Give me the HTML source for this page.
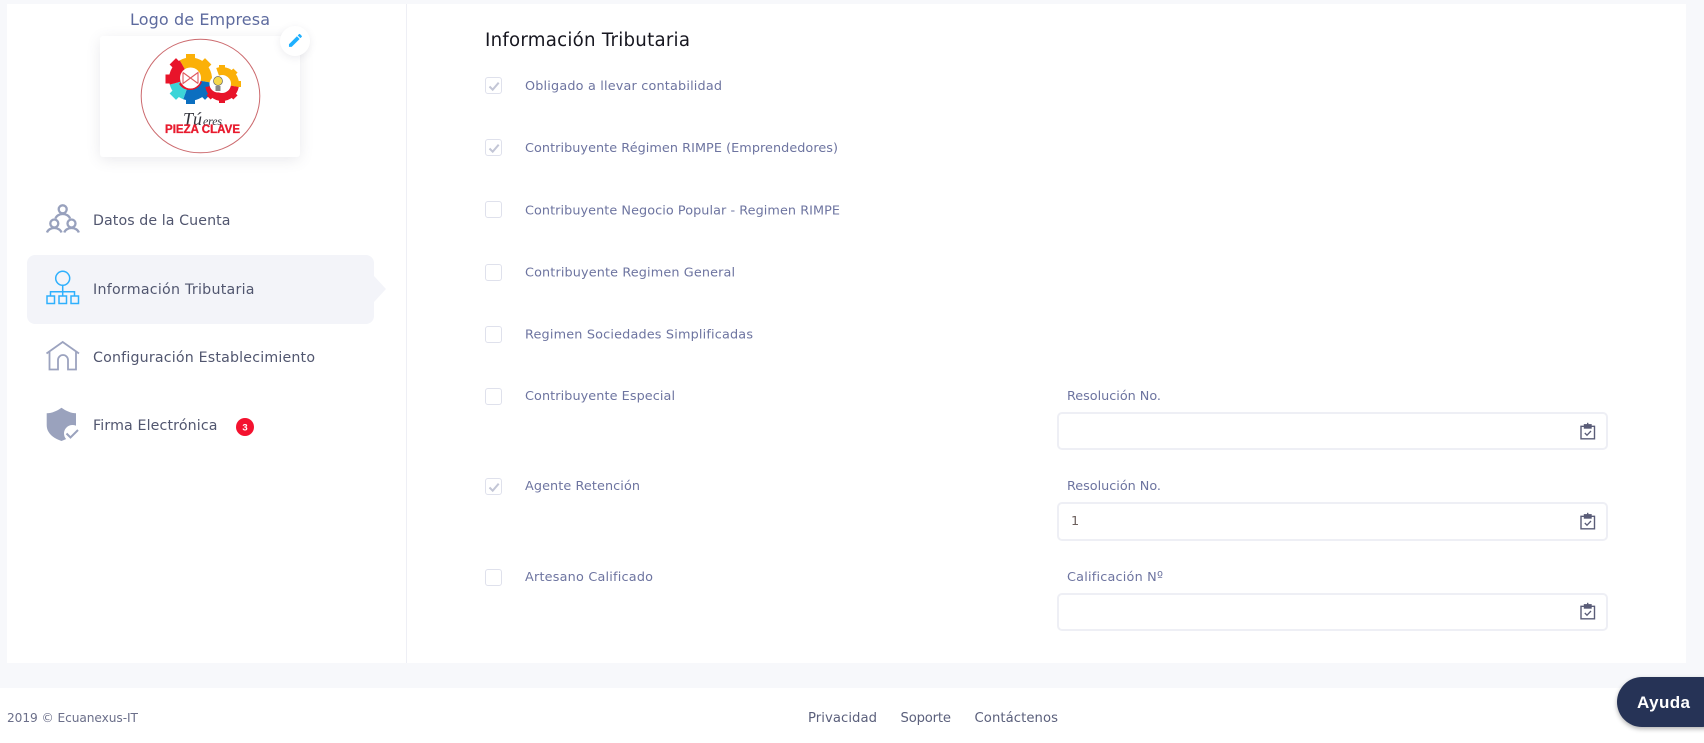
<!DOCTYPE html>
<html lang="es">
<head>
<meta charset="utf-8">
<title>Información Tributaria</title>
<style>
html,body{margin:0;padding:0;width:1704px;height:743px;overflow:hidden;background:#f7f8fb}
.abs{position:absolute}
#card{left:7px;top:4px;width:1679px;height:659px;background:#fff}
#div{left:406px;top:4px;width:1px;height:659px;background:#eeeff5}
#foot{left:0;top:688px;width:1704px;height:55px;background:#fff}
#logo{left:100px;top:36px;width:200px;height:121px;background:#fff;border-radius:3px;box-shadow:0 3px 14px rgba(80,80,110,.12)}
#edit{left:280px;top:26px;width:30px;height:30px;border-radius:50%;background:#fff;box-shadow:0 2px 8px rgba(80,80,110,.1)}
#act{left:27px;top:255px;width:347px;height:69px;background:#f3f4f9;border-radius:8px}
#arrow{left:374px;top:276px;width:0;height:0;border-left:12px solid #f3f4f9;border-top:13px solid transparent;border-bottom:13px solid transparent}
.cb{position:absolute;left:485px;width:15px;height:15px;border:1.5px solid #dfe1ec;border-radius:3px;background:#fff}
.in{position:absolute;left:1057px;width:547px;border:2px solid #eeeff5;border-radius:5px;background:#fff}
#ay{left:1617px;top:677px;width:110px;height:50px;background:#263356;border-radius:25px;box-shadow:0 2px 5px rgba(0,0,0,.3)}
svg{position:absolute;left:0;top:0}
text{font-family:"DejaVu Sans","Liberation Sans",sans-serif}
.l{font-size:12.8px;fill:#6d74a0}
.n{font-size:14.2px;fill:#51566f}
.f{font-size:13.2px;fill:#5b607c}
</style>
</head>
<body>
<div class="abs" id="card"></div>
<div class="abs" id="div"></div>
<div class="abs" id="foot"></div>
<div class="abs" id="logo"></div>
<div class="abs" id="edit"></div>
<div class="abs" id="act"></div>
<div class="abs" id="arrow"></div>

<div class="cb" style="top:77px"></div>
<div class="cb" style="top:139px"></div>
<div class="cb" style="top:201px"></div>
<div class="cb" style="top:264px"></div>
<div class="cb" style="top:326px"></div>
<div class="cb" style="top:388px"></div>
<div class="cb" style="top:478px"></div>
<div class="cb" style="top:569px"></div>

<div class="in" style="top:412px;height:34px"></div>
<div class="in" style="top:502px;height:35px"></div>
<div class="in" style="top:593px;height:34px"></div>

<div class="abs" id="ay"></div>

<svg width="1704" height="743" viewBox="0 0 1704 743">
  <!-- logo -->
  <ellipse cx="200.5" cy="96" rx="59.3" ry="56.8" fill="none" stroke="#cc6a6e" stroke-width="1"/>
  <g fill="#fbb008">
    <rect x="186" y="54" width="9" height="9"/>
    <rect x="186" y="54" width="9" height="9" transform="rotate(45 190.5 79)"/>
  </g>
  <g fill="#0b6fc0">
    <rect x="186" y="54" width="9" height="9" transform="rotate(135 190.5 79)"/>
    <rect x="186" y="54" width="9" height="9" transform="rotate(180 190.5 79)"/>
  </g>
  <rect x="186" y="54" width="9" height="9" fill="#3cd5d8" transform="rotate(225 190.5 79)"/>
  <g fill="#e8142a">
    <rect x="186" y="54" width="9" height="9" transform="rotate(270 190.5 79)"/>
    <rect x="186" y="54" width="9" height="9" transform="rotate(315 190.5 79)"/>
  </g>
  <g fill="none" stroke-width="13">
    <path d="M183 66A15 15 0 0 1 205.300 81.600" stroke="#fbb008"/>
    <path d="M205.300 81.600A15 15 0 0 1 185.400 93.100" stroke="#0b6fc0"/>
    <path d="M185.400 93.100A15 15 0 0 1 176 82.900" stroke="#3cd5d8"/>
    <path d="M176 82.900A15 15 0 0 1 183 66" stroke="#e8142a"/>
  </g>
  <path d="M179 84A13 13 0 0 0 202 82L198 79A10 10 0 0 1 181 82Z" fill="#e8142a"/>
  <circle cx="190.500" cy="78" r="10.500" fill="#fff"/>
  <path d="M183 72.500V83.500L198 72.500V83.500M183 72.500L190.500 78L183 83.500M198 72.500L190.500 78L198 83.500" fill="none" stroke="#df5a60" stroke-width="1.100"/>
  <g fill="#fbb008">
    <rect x="219" y="65" width="6" height="6"/>
    <rect x="219" y="65" width="6" height="6" transform="rotate(45 222 84)"/>
    <rect x="219" y="65" width="6" height="6" transform="rotate(90 222 84)"/>
  </g>
  <g fill="#e8142a">
    <rect x="219" y="65" width="6" height="6" transform="rotate(135 222 84)"/>
    <rect x="219" y="65" width="6" height="6" transform="rotate(180 222 84)"/>
    <rect x="219" y="65" width="6" height="6" transform="rotate(225 222 84)"/>
  </g>
  <g fill="none" stroke-width="8">
    <path d="M217.600 71.800A13 13 0 0 1 234.800 86.300" stroke="#fbb008"/>
    <path d="M234.800 86.300A13 13 0 0 1 209.200 86.300" stroke="#e8142a"/>
  </g>
  <circle cx="218" cy="84" r="8.500" fill="#fff"/>
  <circle cx="218" cy="81" r="4.500" fill="#f7d94c" stroke="#666" stroke-width=".7"/>
  <rect x="215.500" y="86" width="5" height="5" fill="#888"/>
  <text x="183" y="125" font-size="18" style="font-family:'Liberation Serif',serif;font-style:italic;fill:#33343c">Tú</text>
  <text x="203" y="125" font-size="12" textLength="19" style="font-family:'Liberation Serif',serif;font-style:italic;fill:#33343c">eres</text>
  <text x="165" y="133" font-size="11.500" font-weight="700" textLength="75" stroke="#e81b2e" stroke-width=".35" style="font-family:'Liberation Sans',sans-serif;fill:#e81b2e">PIEZA CLAVE</text>

  <!-- edit pencil -->
  <path transform="translate(286.800 31.800) scale(.72)" fill="#1fb0ff" d="M3 17.250V21h3.750L17.810 9.940l-3.750-3.750L3 17.250zM20.710 7.040a1 1 0 0 0 0-1.410l-2.340-2.340a1 1 0 0 0-1.410 0l-1.830 1.830 3.750 3.750 1.830-1.830z"/>

  <!-- headings -->
  <text x="130" y="25" font-size="16" textLength="140" fill="#5d6a9e">Logo de Empresa</text>
  <text x="485" y="46" font-size="18.200" textLength="205" fill="#16161f">Información Tributaria</text>

  <!-- nav -->
  <g fill="none" stroke="#98a1bd" stroke-width="2.300">
    <circle cx="62.700" cy="209.300" r="4"/>
    <path d="M55.500 218.500a7.500 6 0 0 1 14.500 0"/>
    <circle cx="54.300" cy="223.500" r="4"/>
    <path d="M47 232.500a7.500 6 0 0 1 14.500 0"/>
    <circle cx="71.500" cy="223.500" r="4"/>
    <path d="M64.300 232.500a7.500 6 0 0 1 14.500 0"/>
  </g>
  <text class="n" x="93" y="225" textLength="137.500">Datos de la Cuenta</text>

  <g fill="none" stroke="#2fb0fd" stroke-width="1.500">
    <circle cx="62.700" cy="278.300" r="7"/>
    <path d="M62.700 285.300V296M50.500 296V291.700H74.500V296"/>
    <rect x="47" y="296" width="7.500" height="7.500"/>
    <rect x="59" y="296" width="7.500" height="7.500"/>
    <rect x="71" y="296" width="7.500" height="7.500"/>
  </g>
  <text class="n" x="93" y="294" textLength="161.500">Información Tributaria</text>

  <path d="M46.500 353.500L62.700 342L79 353.500M49.500 351.500V369.500H58V360a5 5 0 0 1 10 0V369.500H76V351.500" fill="none" stroke="#9ca3bf" stroke-width="1.800"/>
  <text class="n" x="93" y="362" textLength="222">Configuración Establecimiento</text>

  <path d="M61.500 407.700C57 411 52 413 46.700 413.300V425C46.700 433 53 438 61.500 441C70 438 76 433 76 425V413.300C71 413 66 411 61.500 407.700Z" fill="#9aa2bd"/>
  <circle cx="72.500" cy="433.500" r="8.500" fill="#fff"/>
  <path d="M66.500 433.500L70.500 437.500L78 430" fill="none" stroke="#9aa2bd" stroke-width="2"/>
  <text class="n" x="93" y="430" textLength="124.500">Firma Electrónica</text>
  <circle cx="245" cy="427" r="9" fill="#f4122f"/>
  <text x="245" y="430.500" font-size="9.500" font-weight="700" text-anchor="middle" style="font-family:'Liberation Sans',sans-serif;fill:#fff">3</text>

  <!-- checks -->
  <g fill="none" stroke="#c3c6d6" stroke-width="2">
    <path d="M489.500 86.500L492.700 89.700L498.700 82.700"/>
    <path d="M489.500 148.500L492.700 151.700L498.700 144.700"/>
    <path d="M489.500 487.500L492.700 490.700L498.700 483.700"/>
  </g>

  <!-- labels -->
  <text class="l" x="525" y="90" textLength="197">Obligado a llevar contabilidad</text>
  <text class="l" x="525" y="152" textLength="313">Contribuyente Régimen RIMPE (Emprendedores)</text>
  <text class="l" x="525" y="214.500" textLength="315">Contribuyente Negocio Popular - Regimen RIMPE</text>
  <text class="l" x="525" y="276.500" textLength="210">Contribuyente Regimen General</text>
  <text class="l" x="525" y="338.500" textLength="228">Regimen Sociedades Simplificadas</text>
  <text class="l" x="525" y="400" textLength="150">Contribuyente Especial</text>
  <text class="l" x="525" y="490" textLength="115">Agente Retención</text>
  <text class="l" x="525" y="581" textLength="128">Artesano Calificado</text>

  <text class="l" x="1067" y="400" textLength="94">Resolución No.</text>
  <text class="l" x="1067" y="490" textLength="94">Resolución No.</text>
  <text class="l" x="1067" y="581" textLength="96">Calificación Nº</text>
  <text x="1071" y="525" font-size="12.800" fill="#6c5f5c">1</text>

  <!-- clipboard icons -->
  <g fill="none" stroke="#5a5d78" stroke-width="1.400">
    <path d="M1584.500 426.300H1581V438.800H1594.500V426.300H1591"/>
    <rect x="1584.500" y="424.800" width="6.500" height="3.200" fill="#5a5d78"/>
    <path d="M1587.700 422.800v2"/>
    <path d="M1584.800 433L1587 435.200L1591 431" stroke-width="1.300"/>
  </g>
  <g fill="none" stroke="#5a5d78" stroke-width="1.400" transform="translate(0 90)">
    <path d="M1584.500 426.300H1581V438.800H1594.500V426.300H1591"/>
    <rect x="1584.500" y="424.800" width="6.500" height="3.200" fill="#5a5d78"/>
    <path d="M1587.700 422.800v2"/>
    <path d="M1584.800 433L1587 435.200L1591 431" stroke-width="1.300"/>
  </g>
  <g fill="none" stroke="#5a5d78" stroke-width="1.400" transform="translate(0 180)">
    <path d="M1584.500 426.300H1581V438.800H1594.500V426.300H1591"/>
    <rect x="1584.500" y="424.800" width="6.500" height="3.200" fill="#5a5d78"/>
    <path d="M1587.700 422.800v2"/>
    <path d="M1584.800 433L1587 435.200L1591 431" stroke-width="1.300"/>
  </g>

  <!-- footer -->
  <text x="7" y="722" font-size="12.200" textLength="131" fill="#6b6f8a">2019 © Ecuanexus-IT</text>
  <text class="f" x="808" y="722" textLength="69">Privacidad</text>
  <text class="f" x="900.500" y="722" textLength="50.500">Soporte</text>
  <text class="f" x="974.500" y="722" textLength="83.500">Contáctenos</text>

  <text x="1637" y="708" font-size="17" font-weight="700" textLength="53" style="font-family:'Liberation Sans',sans-serif;fill:#fff">Ayuda</text>
</svg>
</body>
</html>
